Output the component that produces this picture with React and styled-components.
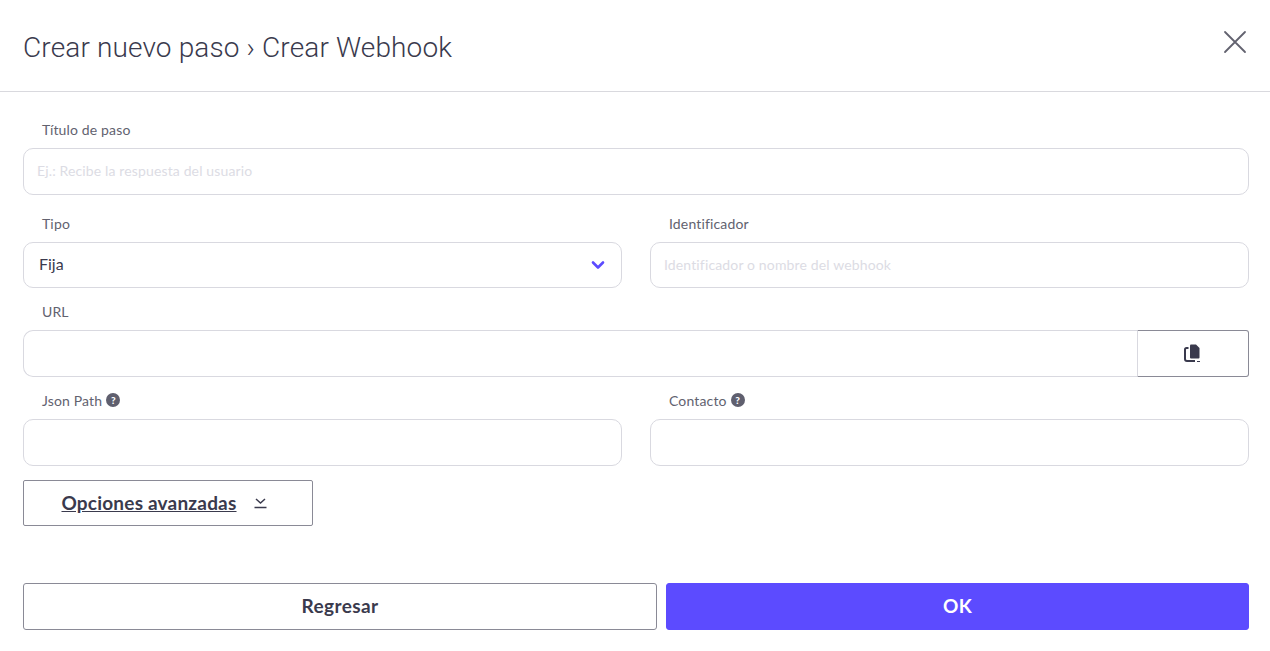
import React from "react";
import styled, { createGlobalStyle } from "styled-components";

const GlobalStyle = createGlobalStyle`
  html, body {
    margin: 0;
    padding: 0;
    background: #fff;
  }
  * {
    box-sizing: border-box;
  }
`;

const Modal = styled.div`
  width: 1270px;
  height: 651px;
  background: #fff;
  color: #3a3a4d;
  font-family: "Lato", "Open Sans", sans-serif;
  overflow: hidden;
`;

const Header = styled.header`
  height: 92px;
  padding: 0 23px;
  display: flex;
  align-items: center;
  justify-content: space-between;
  border-bottom: 1px solid #d9d9de;
`;

const Title = styled.h1`
  margin: 3px 0 0;
  font-family: "Roboto", sans-serif;
  font-size: 28px;
  font-weight: 300;
  letter-spacing: 0.14px;
  color: #3a3a4d;
`;

const CloseButton = styled.button`
  display: flex;
  padding: 0;
  border: none;
  background: none;
  margin-top: -8px;
`;

const Form = styled.div`
  padding: 28px 21px 0 23px;
  display: flex;
  flex-direction: column;
`;

const Row = styled.div`
  display: grid;
  grid-template-columns: 1fr 1fr;
  column-gap: 28px;
  margin-top: ${p => p.$top || 0}px;
`;

const Field = styled.div`
  display: flex;
  flex-direction: column;
  margin-top: ${p => p.$top || 0}px;
`;

const Label = styled.label`
  height: 20px;
  margin-bottom: 8px;
  padding: 0 0 2px 19px;
  display: flex;
  align-items: center;
  gap: 4px;
  font-size: 14px;
  letter-spacing: 0.15px;
  color: #62626f;
`;

const HelpBadge = styled.span`
  width: 14px;
  height: 14px;
  border-radius: 50%;
  background: #5f5f6e;
  color: #fff;
  font-size: 10px;
  font-weight: 900;
  letter-spacing: 0;
  display: flex;
  align-items: center;
  justify-content: center;
`;

const Input = styled.div`
  height: ${p => p.$height || 47}px;
  padding: 0 16px 0 13px;
  display: flex;
  align-items: center;
  justify-content: space-between;
  border: 1px solid #d9d9e0;
  border-radius: 10px;
  background: #fff;
`;

const Placeholder = styled.span`
  margin-top: -2px;
  font-size: 14px;
  letter-spacing: 0.14px;
  color: #dcdce4;
`;

const SelectValue = styled.span`
  margin-top: -4px;
  padding-left: 2px;
  font-size: 16px;
  color: #3a3a4d;
`;

const InputGroup = styled.div`
  display: flex;
`;

const GroupInput = styled(Input)`
  flex: 1;
  border-radius: 10px 0 0 10px;
  border-right: none;
`;

const CopyButton = styled.button`
  width: 112px;
  height: 47px;
  padding: 0;
  display: flex;
  align-items: center;
  justify-content: center;
  background: #fff;
  border: 1px solid #8a8a96;
  border-left-color: #d9d9e0;
  border-radius: 0 3px 3px 0;
`;

const AdvancedButton = styled.button`
  width: 290px;
  height: 46px;
  margin-top: 14px;
  padding: 0 8px 0 0;
  display: flex;
  align-items: center;
  justify-content: center;
  gap: 17px;
  background: #fff;
  border: 1px solid #8a8a96;
  border-radius: 2px;
  font-family: inherit;
  color: #3a3a4d;
`;

const AdvancedText = styled.span`
  margin-top: -2px;
  font-size: 19px;
  letter-spacing: 0.2px;
  font-weight: 700;
  text-decoration: underline;
`;

const Footer = styled.div`
  margin-top: 57px;
  display: grid;
  grid-template-columns: 634px 583px;
  column-gap: 9px;
`;

const FooterButton = styled.button`
  height: 47px;
  padding: 0;
  border-radius: 3px;
  font-family: inherit;
  font-size: 19px;
  letter-spacing: 0.4px;
  font-weight: 700;
  border: 1px solid ${p => (p.$primary ? "#5c4bff" : "#8a8a96")};
  background: ${p => (p.$primary ? "#5c4bff" : "#fff")};
  color: ${p => (p.$primary ? "#fff" : "#3a3a4d")};
`;

const ButtonLabel = styled.span`
  position: relative;
  top: -1px;
`;

const CloseIcon = () => (
  <svg width="24" height="24" viewBox="0 0 24 24" fill="none" stroke="#62626f" strokeWidth="1.8" strokeLinecap="round">
    <path d="M2 2 L22 22 M22 2 L2 22" />
  </svg>
);

const ChevronIcon = () => (
  <svg width="14" height="10" viewBox="0 0 14 10" fill="none" stroke="#5c4bff" strokeWidth="2.6" strokeLinecap="round" strokeLinejoin="round">
    <path d="M2 2.5 L7 7.5 L12 2.5" />
  </svg>
);

const SmallChevronIcon = () => (
  <svg width="13" height="12" viewBox="0 0 13 12" fill="none" stroke="#3a3a4d" strokeWidth="1.5">
    <path d="M2 2 L6.5 6 L11 2" />
    <path d="M0.5 10.5 H12.5" />
  </svg>
);

const CopyIcon = () => (
  <svg width="18" height="19" viewBox="0 0 18 19" fill="none">
    <path d="M6 1.5 Q6 0.5 7 0.5 H12 L15.5 4 V13.5 Q15.5 14.5 14.5 14.5 H7 Q6 14.5 6 13.5 Z" fill="#3a3a4d" />
    <path d="M4.5 4 H2.5 Q1 4 1 5.5 V15 Q1 17 3 17 H11" stroke="#3a3a4d" strokeWidth="2" />
    <path d="M13 17.5 H16" stroke="#3a3a4d" strokeWidth="1" />
  </svg>
);

const App = () => (
  <Modal>
    <GlobalStyle />
    <Header>
      <Title>Crear nuevo paso › Crear Webhook</Title>
      <CloseButton>
        <CloseIcon />
      </CloseButton>
    </Header>
    <Form>
      <Field>
        <Label>Título de paso</Label>
        <Input>
          <Placeholder>Ej.: Recibe la respuesta del usuario</Placeholder>
        </Input>
      </Field>
      <Row $top={19}>
        <Field>
          <Label>Tipo</Label>
          <Input $height={46}>
            <SelectValue>Fija</SelectValue>
            <ChevronIcon />
          </Input>
        </Field>
        <Field>
          <Label>Identificador</Label>
          <Input $height={46}>
            <Placeholder>Identificador o nombre del webhook</Placeholder>
          </Input>
        </Field>
      </Row>
      <Field $top={14}>
        <Label>URL</Label>
        <InputGroup>
          <GroupInput />
          <CopyButton>
            <CopyIcon />
          </CopyButton>
        </InputGroup>
      </Field>
      <Row $top={14}>
        <Field>
          <Label>
            Json Path <HelpBadge>?</HelpBadge>
          </Label>
          <Input />
        </Field>
        <Field>
          <Label>
            Contacto <HelpBadge>?</HelpBadge>
          </Label>
          <Input />
        </Field>
      </Row>
      <AdvancedButton>
        <AdvancedText>Opciones avanzadas</AdvancedText>
        <SmallChevronIcon />
      </AdvancedButton>
      <Footer>
        <FooterButton>
          <ButtonLabel>Regresar</ButtonLabel>
        </FooterButton>
        <FooterButton $primary>
          <ButtonLabel>OK</ButtonLabel>
        </FooterButton>
      </Footer>
    </Form>
  </Modal>
);

export default App;
